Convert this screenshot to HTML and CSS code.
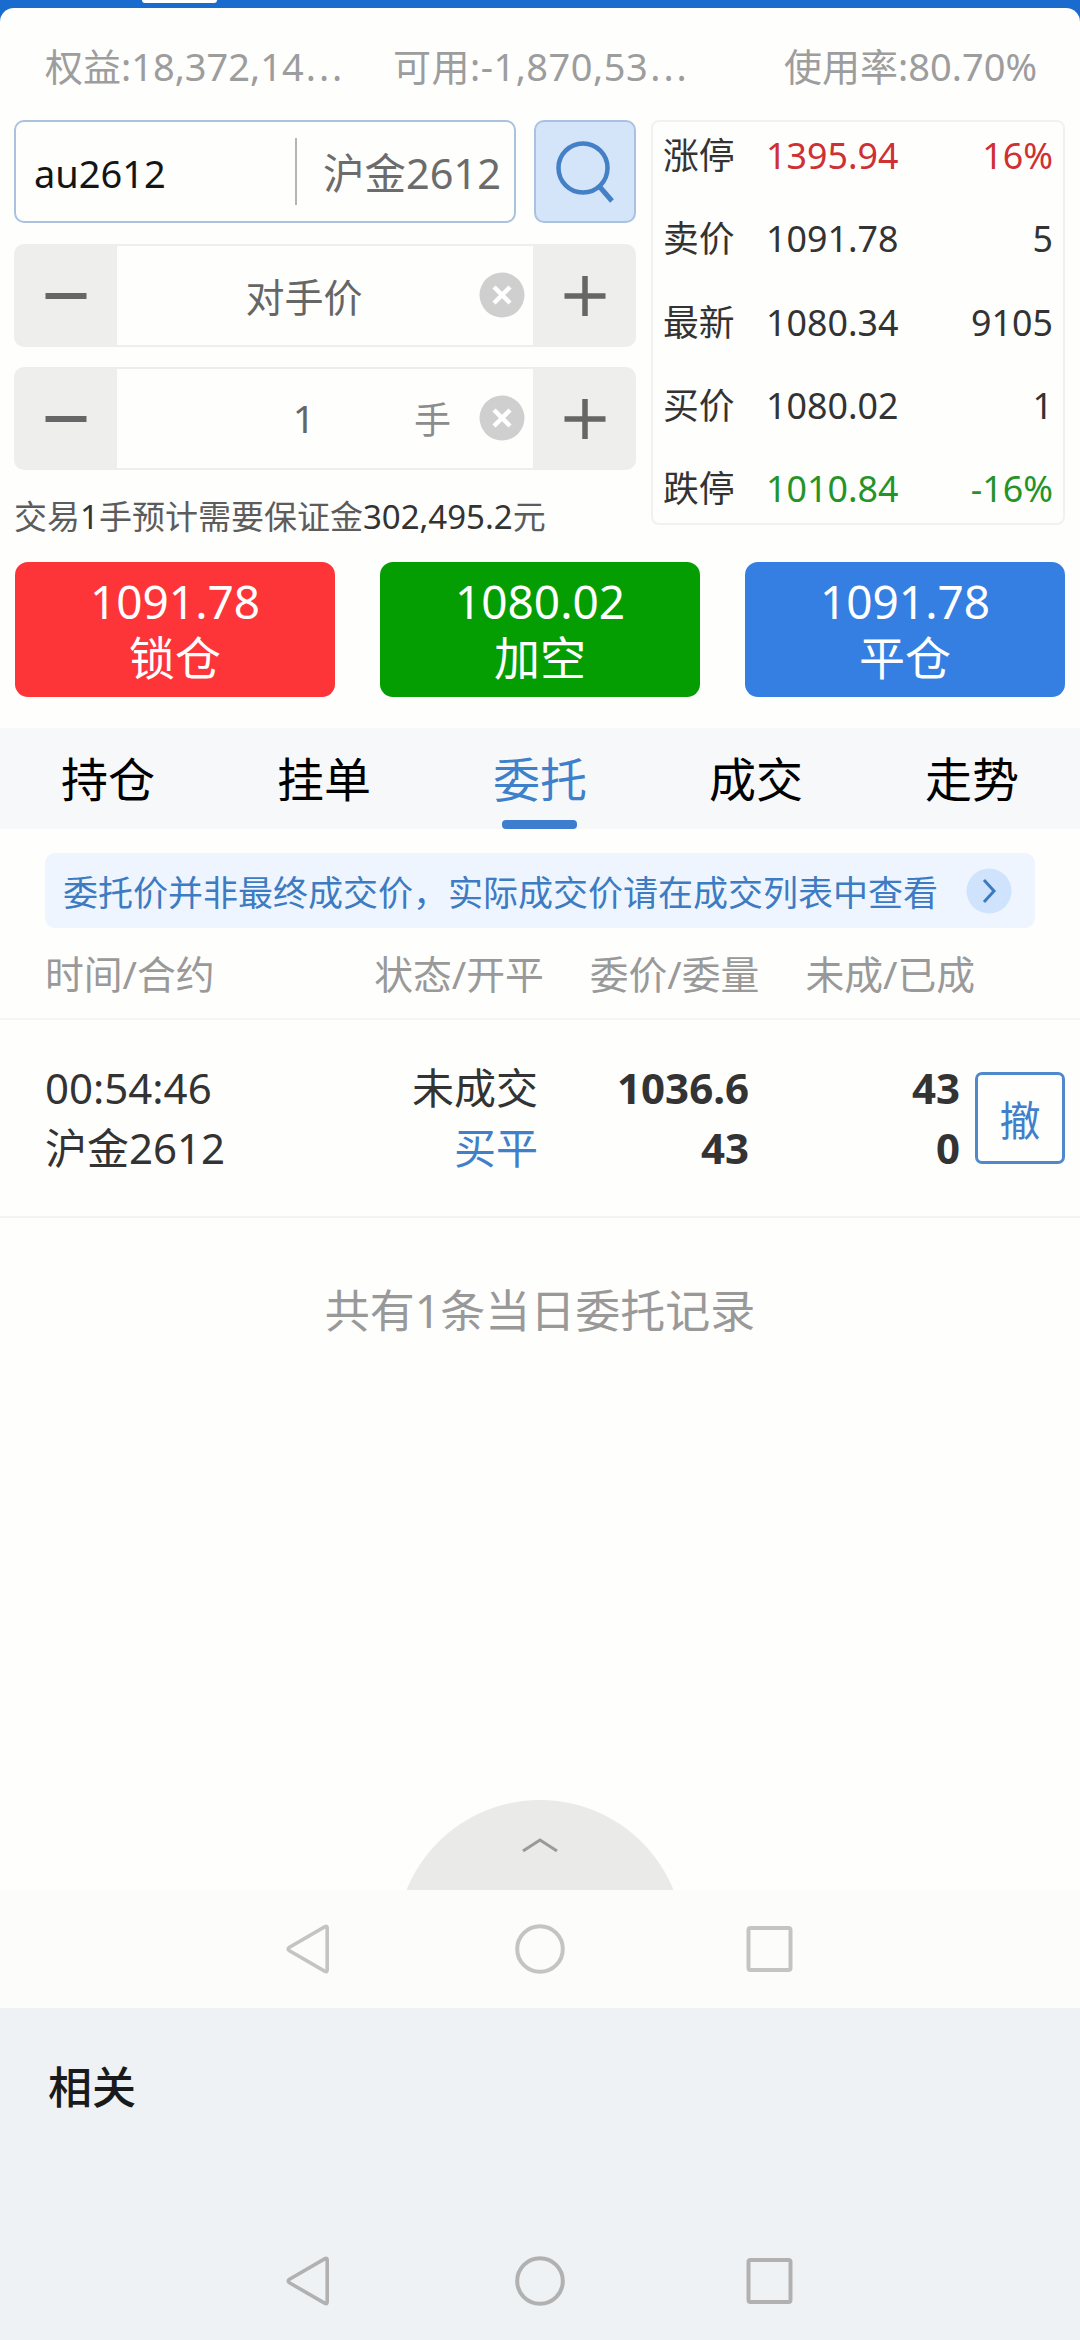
FILE: index.html
```html
<!DOCTYPE html>
<html lang="zh-CN">
<head>
    <meta charset="utf-8">
    <meta name="viewport" content="width=device-width, initial-scale=1">
    <title>交易</title>
    <link rel="stylesheet" href="styles.css">
</head>
<body>

<svg class="sprite">
    <symbol id="icon-minus" viewBox="0 0 42 42">
        <path d="M0.5 21h41" stroke="currentColor" stroke-width="6"/>
    </symbol>
    <symbol id="icon-plus" viewBox="0 0 42 42">
        <path d="M0.5 21h41M21 1v40" stroke="currentColor" stroke-width="5.5"/>
    </symbol>
    <symbol id="icon-clear" viewBox="0 0 46 46">
        <circle cx="23" cy="23" r="22.5" fill="#cfcfcf"/>
        <path d="M15 15l16 16M31 15L15 31" stroke="#fff" stroke-width="4.5"/>
    </symbol>
    <symbol id="icon-back" viewBox="0 0 52 52">
        <path d="M5.5 24.2L41 3.6q2.2-1 2.2 1.6v41.6q0 2.6-2.2 1.6L5.5 27.8q-2.6-1.8 0-3.6z" fill="none" stroke="currentColor" stroke-width="3.6"/>
    </symbol>
    <symbol id="icon-home" viewBox="0 0 52 52">
        <circle cx="26" cy="26" r="22.8" fill="none" stroke="currentColor" stroke-width="4"/>
    </symbol>
    <symbol id="icon-recent" viewBox="0 0 52 52">
        <rect x="4.5" y="5" width="42" height="42" rx="2" fill="none" stroke="currentColor" stroke-width="4"/>
    </symbol>
</svg>

<div class="top-bar"><span class="top-handle"></span></div>

<main class="trade">
    <div class="account">
        <span class="equity">权益:18,372,14<i>...</i></span>
        <span class="available">可用:-1,870,53<i>...</i></span>
        <span class="usage">使用率:80.70%</span>
    </div>

    <div class="order">
        <div class="order-form">
            <div class="search">
                <div class="contract">
                    <span class="code">au2612</span>
                    <span class="name">沪金2612</span>
                </div>
                <button class="search-btn">
                    <svg width="60" height="62" viewBox="0 0 60 62" fill="none" stroke="#4380c6" stroke-width="4.5">
                        <circle cx="28" cy="27" r="24.5"/>
                        <path d="M44 45l13 15" stroke-width="5"/>
                    </svg>
                </button>
            </div>
            <div class="stepper price">
                <button><svg><use href="#icon-minus"/></svg></button>
                <div class="field">
                    <span class="value">对手价</span>
                    <svg class="clear"><use href="#icon-clear"/></svg>
                </div>
                <button><svg><use href="#icon-plus"/></svg></button>
            </div>
            <div class="stepper amount">
                <button><svg><use href="#icon-minus"/></svg></button>
                <div class="field">
                    <span class="value">1</span>
                    <span class="unit">手</span>
                    <svg class="clear"><use href="#icon-clear"/></svg>
                </div>
                <button><svg><use href="#icon-plus"/></svg></button>
            </div>
            <p class="margin-tip">交易<b>1</b>手预计需要保证金<b>302,495.2</b>元</p>
        </div>

        <div class="quotes">
            <div class="quote"><span>涨停</span><span class="up">1395.94</span><span class="up">16%</span></div>
            <div class="quote"><span>卖价</span><span>1091.78</span><span>5</span></div>
            <div class="quote"><span>最新</span><span>1080.34</span><span>9105</span></div>
            <div class="quote"><span>买价</span><span>1080.02</span><span>1</span></div>
            <div class="quote"><span>跌停</span><span class="down">1010.84</span><span class="down">-16%</span></div>
        </div>
    </div>

    <div class="actions">
        <button class="lock"><span>1091.78</span><span>锁仓</span></button>
        <button class="short"><span>1080.02</span><span>加空</span></button>
        <button class="close"><span>1091.78</span><span>平仓</span></button>
    </div>

    <nav class="tabs">
        <a>持仓</a>
        <a>挂单</a>
        <a class="active">委托</a>
        <a>成交</a>
        <a>走势</a>
    </nav>

    <div class="notice">
        <span>委托价并非最终成交价，实际成交价请在成交列表中查看</span>
        <svg width="46" height="46" viewBox="0 0 46 46" fill="none">
            <circle cx="23" cy="23" r="22.5" fill="#d0e3fc"/>
            <path d="M18 12l10 11-10 11" stroke="#3d7bbf" stroke-width="3"/>
        </svg>
    </div>

    <div class="table-head">
        <span>时间/合约</span>
        <span>状态/开平</span>
        <span>委价/委量</span>
        <span>未成/已成</span>
    </div>

    <div class="record">
        <div>00:54:46<br>沪金2612</div>
        <div class="right">未成交<br><span class="buy">买平</span></div>
        <div class="right num">1036.6<br>43</div>
        <div class="right num">43<br>0</div>
        <button class="cancel">撤</button>
    </div>

    <p class="total">共有1条当日委托记录</p>

    <div class="drawer">
        <svg width="40" height="18" viewBox="0 0 40 18" fill="none">
            <path d="M3 15L20 4l17 11" stroke="#9a9a9a" stroke-width="3"/>
        </svg>
    </div>
</main>

<div class="nav-bar inner">
    <svg><use href="#icon-back"/></svg>
    <svg><use href="#icon-home"/></svg>
    <svg><use href="#icon-recent"/></svg>
</div>

<footer class="related">
    <h2>相关</h2>
    <div class="nav-bar">
        <svg><use href="#icon-back"/></svg>
        <svg><use href="#icon-home"/></svg>
        <svg><use href="#icon-recent"/></svg>
    </div>
</footer>

</body>
</html>
```
FILE: styles.css
```css
* {
    box-sizing: border-box;
}

body {
    margin: 0;
    width: 1080px;
    height: 2340px;
    overflow: hidden;
    background: #1a6bce;
    font-family: "Noto Sans", "Noto Sans CJK SC", sans-serif;
    color: #333;
}

button {
    border: 0;
    padding: 0;
    margin: 0;
    font-family: inherit;
    display: flex;
    align-items: center;
    justify-content: center;
}

p, h2 {
    margin: 0;
}

.sprite {
    display: none;
}

.top-bar {
    height: 8px;
    padding-left: 142px;
}

.top-handle {
    display: block;
    width: 75px;
    height: 3px;
    background: #fff;
    border-radius: 0 0 4px 4px;
}

.trade {
    height: 1882px;
    background: #fefefd;
    border-radius: 14px 14px 0 0;
    display: flex;
    flex-direction: column;
}

.account {
    display: flex;
    height: 112px;
    padding: 29px 43px 0 45px;
    font-size: 38px;
    line-height: 58px;
    color: #9d9d9d;
    white-space: nowrap;
}

.account i {
    font-style: normal;
    letter-spacing: 3px;
    margin-left: 2px;
}

.account .equity {
    width: 348px;
}

.account .available {
    letter-spacing: 0.5px;
}

.account .usage {
    margin-left: auto;
}

.order {
    display: flex;
    justify-content: space-between;
    padding: 0 15px 0 14px;
    height: 442px;
}

.order-form {
    width: 622px;
}

.search {
    display: flex;
    justify-content: space-between;
    height: 103px;
    margin-bottom: 21px;
}

.contract {
    width: 502px;
    border: 2px solid #a9c2e0;
    border-radius: 10px;
    display: flex;
    align-items: center;
    padding: 0 13px 0 18px;
}

.contract .code {
    flex: 1;
    padding-top: 2px;
    font-size: 38px;
    color: #151515;
}

.contract .name {
    border-left: 2px solid #b5b5b5;
    padding-left: 26px;
    height: 67px;
    line-height: 70px;
    font-size: 41.5px;
    color: #6c6c6c;
}

.search-btn {
    width: 102px;
    background: #d4e4f9;
    border: 2px solid #a9c2e0;
    border-radius: 10px;
}

.stepper {
    display: flex;
    height: 103px;
    margin-bottom: 20px;
    border-radius: 10px;
    overflow: hidden;
}

.stepper button {
    width: 103px;
    background: #eeeeed;
    color: #666;
}

.stepper button svg {
    width: 42px;
    height: 42px;
}

.stepper .field {
    flex: 1;
    display: flex;
    align-items: center;
    border: solid #eeeeed;
    border-width: 2px 0;
    padding-bottom: 2px;
    font-size: 39px;
    color: #666;
}

.field .value {
    width: 374px;
    text-align: center;
}

.field .unit {
    width: 0;
    margin-left: -77px;
    margin-right: 77px;
    color: #8c8c8c;
    font-size: 37px;
}

.field .clear {
    width: 46px;
    height: 46px;
    margin-left: -12px;
}

.margin-tip {
    margin-top: 2px;
    font-size: 33px;
    line-height: 54px;
    color: #5c5c5c;
    white-space: nowrap;
}

.margin-tip b {
    font-weight: 400;
    color: #333;
}

.quotes {
    width: 414px;
    height: 405px;
    border: 2px solid #f1f1f2;
    border-radius: 8px;
    padding: 8px 10px 10px 10px;
    font-size: 35.8px;
    line-height: 50px;
    display: flex;
    flex-direction: column;
    justify-content: space-between;
}

.quote {
    display: grid;
    grid-template-columns: 103px 1fr auto;
}

.up {
    color: #cf3034;
}

.down {
    color: #259428;
}

.actions {
    display: flex;
    justify-content: space-between;
    padding: 0 15px;
}

.actions button {
    width: 320px;
    height: 135px;
    padding-bottom: 2px;
    flex-direction: column;
    border-radius: 13px;
    color: #fff;
    font-size: 46px;
    line-height: 56px;
}

.lock {
    background: #fd3438;
}

.short {
    background: #049e02;
}

.close {
    background: #347fe1;
}

.tabs {
    display: flex;
    height: 101px;
    margin-top: 31px;
    background: #f6f8fa;
}

.tabs a {
    flex: 1;
    text-align: center;
    font-size: 47px;
    line-height: 102px;
    color: #000;
    position: relative;
}

.tabs .active {
    color: #3f80cb;
}

.tabs .active::after {
    content: "";
    position: absolute;
    left: 70px;
    bottom: 0;
    width: 75px;
    height: 9px;
    border-radius: 4px;
    background: #3d7dd0;
}

.notice {
    display: flex;
    align-items: center;
    justify-content: space-between;
    height: 75px;
    margin: 24px 45px 0;
    padding: 0 23px 0 18px;
    background: #eef5ff;
    border-radius: 10px;
    font-size: 35px;
    color: #3d7bc2;
    white-space: nowrap;
}

.table-head {
    display: flex;
    height: 92px;
    padding: 0 105px 0 45px;
    border-bottom: 2px solid #f5f5f5;
    font-size: 38.8px;
    line-height: 92px;
    color: #999;
}

.table-head span:first-child {
    flex: 1;
}

.table-head span + span {
    margin-left: 46px;
}

.record {
    display: grid;
    grid-template-columns: 250px 243px 211px 211px 105px;
    align-items: center;
    height: 198px;
    padding-left: 45px;
    border-bottom: 2px solid #f3f3f3;
    font-size: 42px;
    line-height: 60px;
}

.record .right {
    text-align: right;
}

.record .num {
    font-weight: 700;
}

.record .buy {
    color: #4080ca;
}

.cancel {
    width: 90px;
    height: 92px;
    margin-left: 15px;
    border: 3px solid #5089cb;
    border-radius: 7px;
    background: #fefefd;
    color: #4080ca;
    font-size: 41px;
}

.total {
    margin-top: 60px;
    text-align: center;
    font-size: 45px;
    line-height: 66px;
    color: #999;
}

/* top part of a 288px circle, the rest is cut by the nav bar */
.drawer {
    width: 288px;
    height: 90px;
    margin: auto auto 0;
    padding-top: 36px;
    text-align: center;
    line-height: 0;
    background: radial-gradient(circle at 144px 144px, #eaeae9 143.5px, transparent 144.5px);
}

.nav-bar {
    display: flex;
    justify-content: center;
    align-items: center;
    gap: 178px;
    height: 118px;
    color: #b1b1b1;
}

.nav-bar svg {
    width: 52px;
    height: 52px;
}

.nav-bar.inner {
    background: #fcfcfa;
    color: #c4c4c4;
}

.related {
    height: 332px;
    padding-top: 46px;
    background: #eef2f5;
}

.related h2 {
    height: 168px;
    padding-left: 48px;
    font-size: 44px;
    font-weight: 500;
    line-height: 66px;
    color: #1a1a1a;
}
```
